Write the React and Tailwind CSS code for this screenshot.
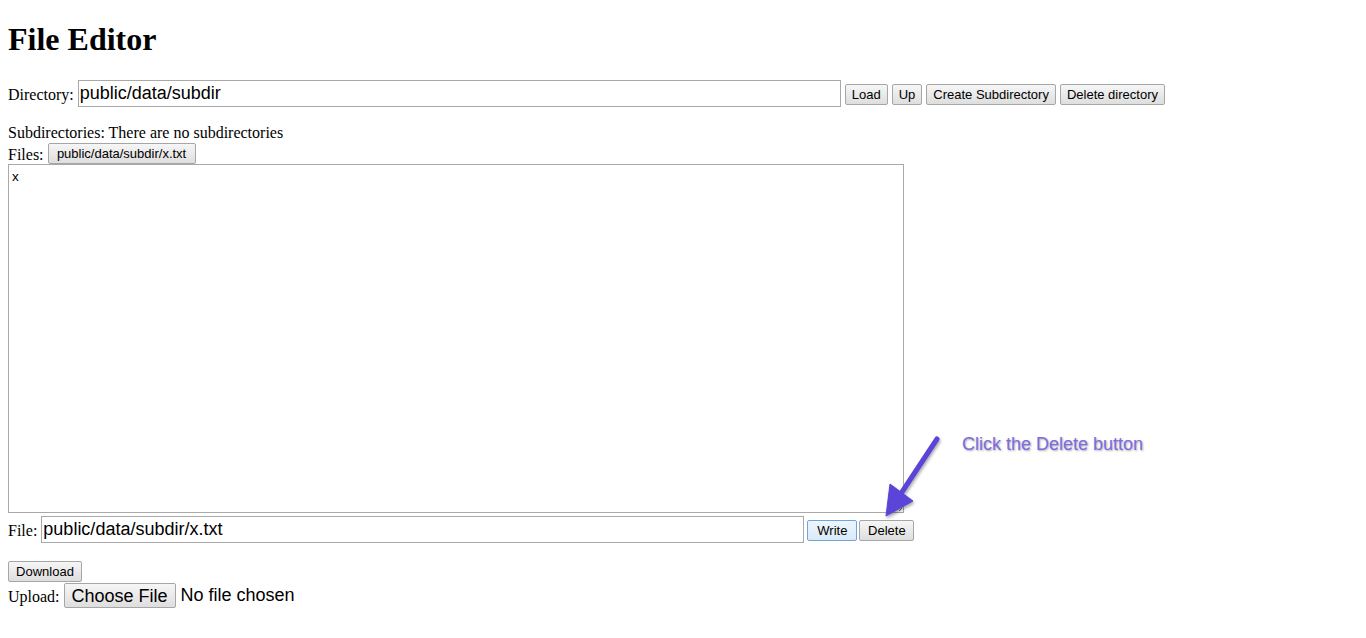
import React from "react";

const base =
  "h-[21px] text-[13px] leading-none text-black border rounded-[2px] bg-gradient-to-b [font-family:'Liberation_Sans',Arial,sans-serif]";
const btn = `${base} px-[6px] border-[#a6a6a6] from-[#f6f6f6] to-[#dedede]`;

export default function App() {
  return (
    <div className="relative min-h-[638px] bg-white px-[8px] text-black [font-family:'Liberation_Serif','Times_New_Roman',serif] text-[16px]">
      <h1 className="pt-[21px] mb-[21px] text-[32px] font-bold leading-[37px]">File Editor</h1>

      <div className="flex items-center h-[28px]">
        <span className="leading-none pt-[3px]">Directory:</span>
        <input
          readOnly
          value="public/data/subdir"
          className="ml-[4px] w-[763px] h-[27px] border border-[#a9a9a9] px-[1px] text-[18px] [font-family:'Liberation_Sans',Arial,sans-serif] outline-none"
        />
        <button className={`${btn} ml-[4px] mt-[2px]`}>Load</button>
        <button className={`${btn} ml-[4px] mt-[2px]`}>Up</button>
        <button className={`${btn} ml-[4px] mt-[2px]`}>Create Subdirectory</button>
        <button className={`${btn} ml-[4px] mt-[2px]`}>Delete directory</button>
      </div>

      <div className="mt-[17px] leading-[18px]">Subdirectories: There are no subdirectories</div>
      <div className="flex items-end h-[22px]">
        <span className="leading-[18px]">Files:</span>
        <button className={`${btn} ml-[4px] h-[20px] w-[148px] px-0`}>public/data/subdir/x.txt</button>
      </div>
      <textarea
        readOnly
        value="x"
        className="block w-[896px] h-[349px] border border-[#a9a9a9] px-[3px] py-[2px] text-[13.5px] [font-family:'Liberation_Sans',Arial,sans-serif] resize outline-none"
      />

      <div className="flex items-center h-[29px] mt-[2px]">
        <span className="leading-none pt-[3px]">File:</span>
        <input
          readOnly
          value="public/data/subdir/x.txt"
          className="ml-[4px] w-[763px] h-[27px] border border-[#a9a9a9] px-[1px] text-[18px] [font-family:'Liberation_Sans',Arial,sans-serif] outline-none"
        />
        <button className={`${base} ml-[3px] mt-[2px] w-[50px] px-0 border-[#6fa4dc] from-[#eef6fd] to-[#d9eaf8]`}>Write</button>
        <button className={`${btn} ml-[2px] mt-[2px] w-[55px] px-0`}>Delete</button>
      </div>

      <div className="mt-[15px]">
        <button className={`${btn} w-[74px] px-0`}>Download</button>
      </div>
      <div className="flex items-center h-[25px]">
        <span className="leading-none pt-[3px]">Upload:</span>
        <button className="ml-[4px] h-[25px] w-[112px] text-[18px] leading-none border border-[#a6a6a6] rounded-[2px] bg-gradient-to-b from-[#f6f6f6] to-[#dedede] [font-family:'Liberation_Sans',Arial,sans-serif]">
          Choose File
        </button>
        <span className="ml-[5px] text-[18px] [font-family:'Liberation_Sans',Arial,sans-serif]">No file chosen</span>
      </div>

      <svg
        className="absolute left-[870px] top-[425px] pointer-events-none"
        width="90"
        height="105"
        viewBox="870 425 90 105"
      >
        <defs>
          <filter id="sh" x="-30%" y="-30%" width="160%" height="160%">
            <feDropShadow dx="1" dy="2" stdDeviation="1.5" floodColor="#000" floodOpacity="0.35" />
          </filter>
        </defs>
        <g filter="url(#sh)" fill="#5a44d8" stroke="#5a44d8">
          <line x1="937" y1="439" x2="902" y2="492" strokeWidth="5" strokeLinecap="round" />
          <polygon points="886,516 890,484 913,501" strokeWidth="1" strokeLinejoin="round" />
        </g>
      </svg>

      <div className="absolute left-[962px] top-[434px] text-[18px] leading-[20px] text-[#7b6be3] [font-family:'Liberation_Sans',Arial,sans-serif] [text-shadow:1px_1px_2px_rgba(0,0,0,0.35)]">
        Click the Delete button
      </div>
    </div>
  );
}
